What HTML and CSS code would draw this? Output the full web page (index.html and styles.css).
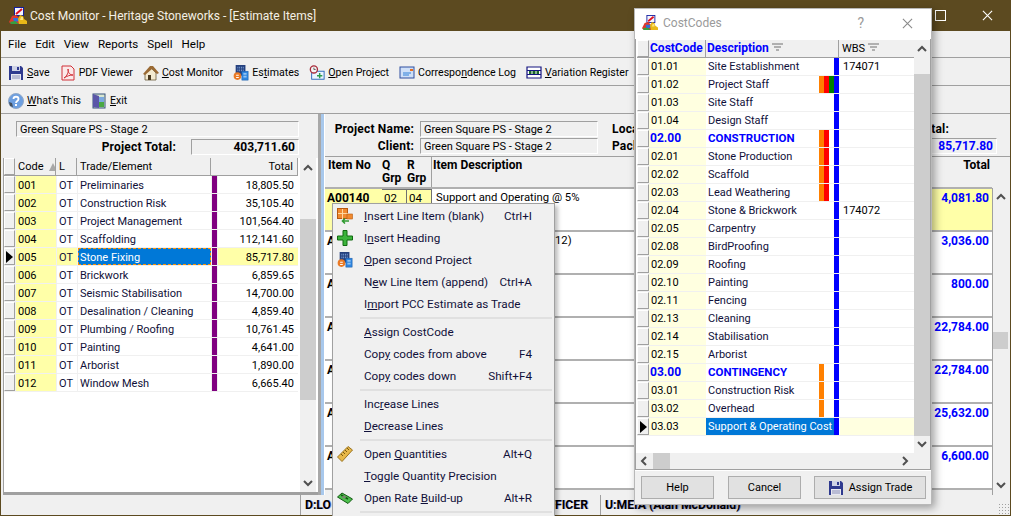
FILE: index.html
```html
<!DOCTYPE html>
<html lang="en">
<head>
    <meta charset="UTF-8">
    <title>Cost Monitor - Heritage Stoneworks - [Estimate Items]</title>
    <link rel="stylesheet" href="styles.css">
</head>
<body>
    <!-- shared icons -->
    <svg class="icon-defs" width="0" height="0">
        <symbol id="i-logo" viewBox="0 0 18 18">
            <rect x="5.500" y="0.500" width="9" height="8" fill="#f4f4ff" stroke="#1420a0"/>
            <path d="M7 7 13 2" stroke="#e0101e" stroke-width="2"/>
            <path d="M0 15 3 9l4-1 3 3 1 6H2z" fill="#e0382a"/>
            <path d="M4 11l5 0 2 3-6 1z" fill="#2f6fd8"/>
            <path d="M1 15l5-1 4 3H2z" fill="#35a040"/>
            <path d="M9 12l2-4 3 1 1 3 3 2v3l-8 0z" fill="#e8b818"/>
            <path d="M12 10l2 0 0 3-3 0z" fill="#fbe37a"/>
        </symbol>
        <symbol id="i-building" viewBox="0 0 18 18">
            <rect x="3" y="0" width="11" height="12" fill="#26417e"/>
            <path d="M5 2h1v2H5zM7 2h1v2H7zM9 2h1v2H9zM11 2h1v2h-1zM5 5h1v2H5zM7 5h1v2H7zM9 5h1v2H9zM11 5h1v2h-1z" fill="#7aa0d8"/>
            <rect x="10" y="7" width="7" height="10" fill="#2f86e0" stroke="#1a5aa8" stroke-width="0.600"/>
            <path d="M12 9h1v2h-1zM14 9h1v2h-1zM12 12h1v2h-1zM14 12h1v2h-1z" fill="#e4f2ff"/>
            <circle cx="5" cy="12.500" r="4.300" fill="#ea7a26"/>
            <path d="M3.500 11h3v1h-3zM3.500 13.500h3v1h-3z" fill="#fff"/>
        </symbol>
        <symbol id="i-floppy" viewBox="0 0 16 16">
            <path d="M1 1h12l2 2v12H1z" fill="#2f3a8f"/>
            <rect x="4" y="1" width="8" height="5" fill="#cfd3e6"/>
            <rect x="9" y="2" width="2" height="3" fill="#2f3a8f"/>
            <rect x="3" y="9" width="10" height="6" fill="#e8e8f0"/>
            <path d="M4 11h8M4 13h8" stroke="#8a8fb8"/>
        </symbol>
        <symbol id="i-up" viewBox="0 0 16 16">
            <path d="M4 10l4-4 4 4" fill="none" stroke="#505050" stroke-width="2"/>
        </symbol>
        <symbol id="i-down" viewBox="0 0 16 16">
            <path d="M4 6l4 4 4-4" fill="none" stroke="#505050" stroke-width="2"/>
        </symbol>
        <symbol id="i-left" viewBox="0 0 16 16">
            <path d="M10 4 6 8l4 4" fill="none" stroke="#505050" stroke-width="2"/>
        </symbol>
        <symbol id="i-right" viewBox="0 0 16 16">
            <path d="M6 4l4 4-4 4" fill="none" stroke="#505050" stroke-width="2"/>
        </symbol>
        <symbol id="i-sort" viewBox="0 0 11 9">
            <path d="M0 1h11M2 4h7M4 7h3" stroke="#707070"/>
        </symbol>
    </svg>

    <div class="app">
        <div class="titlebar">
            <svg class="app-logo"><use href="#i-logo"/></svg>
            <span class="app-title">Cost Monitor - Heritage Stoneworks - [Estimate Items]</span>
            <div class="win-controls">
                <span class="win-max"></span>
                <svg class="win-close" viewBox="0 0 12 12"><path d="M1 1l10 10M11 1 1 11" stroke="#fff" stroke-width="1.200"/></svg>
            </div>
        </div>

        <div class="menubar">
            <span>File</span><span>Edit</span><span>View</span><span>Reports</span><span>Spell</span><span>Help</span>
        </div>

        <div class="toolbar">
            <span class="tool">
                <svg class="tool-icon" viewBox="0 0 16 16"><use href="#i-floppy"/></svg>
                <span><u>S</u>ave</span>
            </span>
            <span class="tool">
                <svg class="tool-icon" viewBox="0 0 16 16">
                    <path d="M2 1h9l3 3v11H2z" fill="#fbe9e9" stroke="#d03038"/>
                    <path d="M4 13c3-2 5-6 4-9 0 4 2 6 5 6-3 0-6 1-9 3z" fill="none" stroke="#d03038"/>
                </svg>
                <span>PDF Viewer</span>
            </span>
            <span class="tool">
                <svg class="tool-icon" viewBox="0 0 16 16">
                    <path d="M2 9v6h11V8L8 3z" fill="#f4ead0" stroke="#6a5a3a" stroke-width="0.800"/>
                    <path d="M0 9 7 1h3l6 7-2 1-5-5-7 6z" fill="#9a6a34"/>
                    <rect x="5" y="10" width="3" height="5" fill="#4a3a20"/>
                </svg>
                <span><u>C</u>ost Monitor</span>
            </span>
            <span class="tool">
                <svg class="tool-icon"><use href="#i-building"/></svg>
                <span>Es<u>t</u>imates</span>
            </span>
            <span class="tool">
                <svg class="tool-icon" viewBox="0 0 18 18">
                    <rect x="3" y="7" width="14" height="9" fill="#eaf4ff" stroke="#1f5fb8"/>
                    <path d="M9 12h6M12 9v6" stroke="#2a9a4a" stroke-width="1.600"/>
                    <circle cx="5.500" cy="5" r="4" fill="#f4f4f4" stroke="#a82a3a" stroke-width="1.500"/>
                    <path d="M5.500 3v2h2" fill="none" stroke="#505050"/>
                </svg>
                <span><u>O</u>pen Project</span>
            </span>
            <span class="tool">
                <svg class="tool-icon" viewBox="0 0 16 16">
                    <rect x="1" y="2" width="14" height="11" fill="#cfe0f8" stroke="#2f4fa0"/>
                    <path d="M4 8h8M4 10h6" stroke="#2f80d8"/>
                    <path d="M11 4h3v2h-3z" fill="#e87020"/>
                </svg>
                <span>Correspo<u>n</u>dence Log</span>
            </span>
            <span class="tool">
                <svg class="tool-icon" viewBox="0 0 16 16">
                    <path d="M1 2h14v11H1zM1 5.500h14M1 9.500h14" fill="#fff" stroke="#141480" stroke-width="1.200"/>
                    <rect x="3" y="6" width="10" height="3" fill="#1c6a2a"/>
                    <path d="M6 6v3M10 6v3" stroke="#fff"/>
                </svg>
                <span><u>V</u>ariation Register</span>
            </span>
        </div>

        <div class="toolbar">
            <span class="tool tool-help">
                <svg class="tool-icon" viewBox="0 0 16 16">
                    <circle cx="8" cy="8" r="7.500" fill="#6d9fe0" stroke="#90a8c8"/>
                    <path d="M5.500 6c0-3 5-3 5 0 0 2-2.500 2-2.500 4" fill="none" stroke="#fff" stroke-width="1.800"/>
                    <rect x="7" y="11" width="2" height="2" fill="#fff"/>
                    <path d="M1 9l3 1 1 4-3-1z" fill="#44505e"/>
                </svg>
                <span><u>W</u>hat's This</span>
            </span>
            <span class="tool tool-exit">
                <svg class="tool-icon" viewBox="0 0 16 16">
                    <rect x="2" y="1" width="12" height="14" fill="#d8e6d0" stroke="#34507a"/>
                    <path d="M8 4h5v5H8z" fill="#7aa8e0"/>
                    <path d="M8 9h5v5H8z" fill="#49a843"/>
                    <path d="M2 1l6 2v12l-6-1z" fill="#5a56a8"/>
                </svg>
                <span><u>E</u>xit</span>
            </span>
        </div>

        <div class="main">
            <div class="trade-panel">
                <div class="trade-summary">
                    <div class="field-box field-wide">Green Square PS - Stage 2</div>
                    <div class="total-line">
                        <span class="label-bold">Project Total:</span>
                        <span class="field-box field-total">403,711.60</span>
                    </div>
                </div>
                <div class="trade-grid">
                    <div class="trade-table">
                        <div class="trade-row trade-head">
                            <span class="cell-btn"></span>
                            <span class="head-cell head-code">Code <span class="sort-tri"></span></span>
                            <span class="head-cell">L</span>
                            <span class="head-cell">Trade/Element</span>
                            <span class="head-cell head-total">Total</span>
                        </div>
                        <div class="trade-row"><span class="cell-btn"></span><span class="code">001</span><span class="lvl">OT</span><span class="name">Preliminaries</span><span class="stripe"></span><span class="amt">18,805.50</span></div>
                        <div class="trade-row"><span class="cell-btn"></span><span class="code">002</span><span class="lvl">OT</span><span class="name">Construction Risk</span><span class="stripe"></span><span class="amt">35,105.40</span></div>
                        <div class="trade-row"><span class="cell-btn"></span><span class="code">003</span><span class="lvl">OT</span><span class="name">Project Management</span><span class="stripe"></span><span class="amt">101,564.40</span></div>
                        <div class="trade-row"><span class="cell-btn"></span><span class="code">004</span><span class="lvl">OT</span><span class="name">Scaffolding</span><span class="stripe"></span><span class="amt">112,141.60</span></div>
                        <div class="trade-row is-current"><span class="cell-btn"><span class="row-arrow"></span></span><span class="code">005</span><span class="lvl">OT</span><span class="name">Stone Fixing</span><span class="stripe"></span><span class="amt">85,717.80</span></div>
                        <div class="trade-row"><span class="cell-btn"></span><span class="code">006</span><span class="lvl">OT</span><span class="name">Brickwork</span><span class="stripe"></span><span class="amt">6,859.65</span></div>
                        <div class="trade-row"><span class="cell-btn"></span><span class="code">007</span><span class="lvl">OT</span><span class="name">Seismic Stabilisation</span><span class="stripe"></span><span class="amt">14,700.00</span></div>
                        <div class="trade-row"><span class="cell-btn"></span><span class="code">008</span><span class="lvl">OT</span><span class="name">Desalination / Cleaning</span><span class="stripe"></span><span class="amt">4,859.40</span></div>
                        <div class="trade-row"><span class="cell-btn"></span><span class="code">009</span><span class="lvl">OT</span><span class="name">Plumbing / Roofing</span><span class="stripe"></span><span class="amt">10,761.45</span></div>
                        <div class="trade-row"><span class="cell-btn"></span><span class="code">010</span><span class="lvl">OT</span><span class="name">Painting</span><span class="stripe"></span><span class="amt">4,641.00</span></div>
                        <div class="trade-row"><span class="cell-btn"></span><span class="code">011</span><span class="lvl">OT</span><span class="name">Arborist</span><span class="stripe"></span><span class="amt">1,890.00</span></div>
                        <div class="trade-row"><span class="cell-btn"></span><span class="code">012</span><span class="lvl">OT</span><span class="name">Window Mesh</span><span class="stripe"></span><span class="amt">6,665.40</span></div>
                    </div>
                    <div class="vscroll vscroll-trade">
                        <svg class="arrow"><use href="#i-up"/></svg>
                        <div class="thumb"></div>
                        <svg class="arrow arrow-end"><use href="#i-down"/></svg>
                    </div>
                </div>
            </div>

            <div class="splitter"></div>

            <div class="item-panel">
                <div class="item-summary">
                    <div class="info-labels">
                        <span class="label-bold">Project Name:</span>
                        <span class="label-bold">Client:</span>
                    </div>
                    <div class="info-fields">
                        <div class="field-box">Green Square PS - Stage 2</div>
                        <div class="field-box">Green Square PS - Stage 2</div>
                    </div>
                    <div class="info-extra">
                        <span class="label-bold">Loca</span>
                        <span class="label-bold">Pack</span>
                    </div>
                    <div class="info-total">
                        <span class="label-bold">tal:</span>
                        <span class="field-box field-blue">85,717.80</span>
                    </div>
                </div>
                <div class="item-grid">
                    <div class="item-table">
                        <div class="item-row item-head">
                            <span>Item No</span>
                            <span>Q<br>Grp</span>
                            <span>R<br>Grp</span>
                            <span>Item Description</span>
                            <span class="item-amt">Total</span>
                        </div>
                        <div class="item-row is-current">
                            <span class="item-no">A00140</span><span class="grp">02</span><span class="grp">04</span>
                            <span class="item-desc">Support and Operating @ 5%</span><span class="item-amt">4,081.80</span>
                        </div>
                        <div class="item-row">
                            <span class="item-no">A</span><span></span><span></span>
                            <span class="item-desc"><span class="desc-tail">12)</span></span><span class="item-amt">3,036.00</span>
                        </div>
                        <div class="item-row"><span class="item-no">A</span><span></span><span></span><span></span><span class="item-amt">800.00</span></div>
                        <div class="item-row"><span class="item-no">A</span><span></span><span></span><span></span><span class="item-amt">22,784.00</span></div>
                        <div class="item-row"><span class="item-no">A</span><span></span><span></span><span></span><span class="item-amt">22,784.00</span></div>
                        <div class="item-row"><span class="item-no">A</span><span></span><span></span><span></span><span class="item-amt">25,632.00</span></div>
                        <div class="item-row"><span class="item-no">A</span><span></span><span></span><span></span><span class="item-amt">6,600.00</span></div>
                    </div>
                    <div class="vscroll vscroll-item">
                        <svg class="arrow"><use href="#i-up"/></svg>
                        <div class="thumb"></div>
                        <svg class="arrow arrow-end"><use href="#i-down"/></svg>
                    </div>
                </div>
            </div>
        </div>

        <div class="statusbar">
            <span class="status-cell status-first"></span>
            <span class="status-cell status-dept"><span>D:LO</span><span>FFICER</span></span>
            <span class="status-cell status-user">U:MEIA (Alan McDonald)</span>
            <span class="grip"></span>
        </div>
    </div>

    <!-- right click menu -->
    <div class="popup">
        <div class="popup-item">
            <svg class="popup-icon" viewBox="0 0 16 16">
                <rect x="0.500" y="0.500" width="10" height="10" fill="#f08a30" stroke="#b85a10"/>
                <path d="M5.500 1v10M1 5.500h10" stroke="#ffd8a0"/>
                <rect x="10" y="6" width="5.500" height="5" fill="#f08a30" stroke="#b85a10" stroke-width="0.600"/>
                <path d="M12 13H6m2-2.500L5.500 13 8 15.500" fill="none" stroke="#2f9a30" stroke-width="1.600"/>
            </svg>
            <span class="popup-text"><u>I</u>nsert Line Item (blank)</span><span class="popup-key">Ctrl+I</span>
        </div>
        <div class="popup-item">
            <svg class="popup-icon" viewBox="0 0 16 16"><path d="M6 0.500h4v5.500h5.500v4H10v5.500H6V10H0.500V6H6z" fill="#3cb43c" stroke="#116a11"/></svg>
            <span class="popup-text">I<u>n</u>sert Heading</span>
        </div>
        <div class="popup-item">
            <svg class="popup-icon"><use href="#i-building"/></svg>
            <span class="popup-text"><u>O</u>pen second Project</span>
        </div>
        <div class="popup-item"><span class="popup-text">N<u>e</u>w Line Item (append)</span><span class="popup-key">Ctrl+A</span></div>
        <div class="popup-item"><span class="popup-text">I<u>m</u>port PCC Estimate as Trade</span></div>
        <div class="popup-sep"></div>
        <div class="popup-item"><span class="popup-text"><u>A</u>ssign CostCode</span></div>
        <div class="popup-item"><span class="popup-text">Cop<u>y</u> codes from above</span><span class="popup-key">F4</span></div>
        <div class="popup-item"><span class="popup-text">Cop<u>y</u> codes down</span><span class="popup-key">Shift+F4</span></div>
        <div class="popup-sep"></div>
        <div class="popup-item"><span class="popup-text">Inc<u>r</u>ease Lines</span></div>
        <div class="popup-item"><span class="popup-text"><u>D</u>ecrease Lines</span></div>
        <div class="popup-sep"></div>
        <div class="popup-item">
            <svg class="popup-icon" viewBox="0 0 16 16">
                <path d="M0.500 11 11 0.500l4.500 3.500L5 15.500z" fill="#e8b84a" stroke="#9a7420"/>
                <path d="M4 8l2 2M6 6l2 2M8 4l2 2M10 2l2 2" stroke="#7a5a10"/>
            </svg>
            <span class="popup-text">Open <u>Q</u>uantities</span><span class="popup-key">Alt+Q</span>
        </div>
        <div class="popup-item"><span class="popup-text"><u>T</u>oggle Quantity Precision</span></div>
        <div class="popup-item">
            <svg class="popup-icon" viewBox="0 0 16 16">
                <path d="M0.500 7 5 3l10.500 6L11 13.500z" fill="#4cc04c" stroke="#155a15"/>
                <path d="M4 5l7 4" stroke="#0f5a0f" stroke-width="1.500"/>
                <ellipse cx="7" cy="7" rx="2" ry="1.500" fill="#7a8a70"/>
            </svg>
            <span class="popup-text">Open Rate <u>B</u>uild-up</span><span class="popup-key">Alt+R</span>
        </div>
        <div class="popup-sep"></div>
    </div>

    <!-- cost code dialog -->
    <div class="dialog">
        <div class="dialog-title">
            <svg class="dialog-logo"><use href="#i-logo"/></svg>
            <span class="dialog-name">CostCodes</span>
            <span class="dialog-help">?</span>
            <svg class="dialog-close" viewBox="0 0 12 12"><path d="M1 1l10 10M11 1 1 11" stroke="#8a8a8a" stroke-width="1.200"/></svg>
        </div>
        <div class="code-area">
            <div class="code-main">
                <div class="code-table">
                    <div class="code-row code-head">
                        <span class="cell-btn"></span>
                        <span class="chead chead-blue">CostCode</span>
                        <span class="chead chead-blue">Description <svg class="sort-icon"><use href="#i-sort"/></svg></span>
                        <span class="chead">WBS <svg class="sort-icon"><use href="#i-sort"/></svg></span>
                    </div>
                    <div class="code-row"><span class="cell-btn"></span><span class="cc">01.01</span><span class="cd">Site Establishment</span><span class="bars"><i class="b-blue"></i></span><span class="wbs">174071</span></div>
                    <div class="code-row"><span class="cell-btn"></span><span class="cc">01.02</span><span class="cd">Project Staff</span><span class="bars"><i class="b-orange"></i><i class="b-red"></i><i class="b-green"></i><i class="b-blue"></i></span><span class="wbs"></span></div>
                    <div class="code-row"><span class="cell-btn"></span><span class="cc">01.03</span><span class="cd">Site Staff</span><span class="bars"><i class="b-blue"></i></span><span class="wbs"></span></div>
                    <div class="code-row"><span class="cell-btn"></span><span class="cc">01.04</span><span class="cd">Design Staff</span><span class="bars"><i class="b-blue"></i></span><span class="wbs"></span></div>
                    <div class="code-row is-group"><span class="cell-btn"></span><span class="cc">02.00</span><span class="cd">CONSTRUCTION</span><span class="bars"><i class="b-orange"></i><i class="b-red"></i><i></i><i class="b-blue"></i></span><span class="wbs"></span></div>
                    <div class="code-row"><span class="cell-btn"></span><span class="cc">02.01</span><span class="cd">Stone Production</span><span class="bars"><i class="b-orange"></i><i class="b-red"></i><i></i><i class="b-blue"></i></span><span class="wbs"></span></div>
                    <div class="code-row"><span class="cell-btn"></span><span class="cc">02.02</span><span class="cd">Scaffold</span><span class="bars"><i class="b-orange"></i><i class="b-red"></i><i></i><i class="b-blue"></i></span><span class="wbs"></span></div>
                    <div class="code-row"><span class="cell-btn"></span><span class="cc">02.03</span><span class="cd">Lead Weathering</span><span class="bars"><i class="b-orange"></i><i class="b-red"></i><i></i><i class="b-blue"></i></span><span class="wbs"></span></div>
                    <div class="code-row"><span class="cell-btn"></span><span class="cc">02.04</span><span class="cd">Stone &amp; Brickwork</span><span class="bars"><i class="b-blue"></i></span><span class="wbs">174072</span></div>
                    <div class="code-row"><span class="cell-btn"></span><span class="cc">02.05</span><span class="cd">Carpentry</span><span class="bars"><i class="b-blue"></i></span><span class="wbs"></span></div>
                    <div class="code-row"><span class="cell-btn"></span><span class="cc">02.08</span><span class="cd">BirdProofing</span><span class="bars"><i class="b-blue"></i></span><span class="wbs"></span></div>
                    <div class="code-row"><span class="cell-btn"></span><span class="cc">02.09</span><span class="cd">Roofing</span><span class="bars"><i class="b-blue"></i></span><span class="wbs"></span></div>
                    <div class="code-row"><span class="cell-btn"></span><span class="cc">02.10</span><span class="cd">Painting</span><span class="bars"><i class="b-blue"></i></span><span class="wbs"></span></div>
                    <div class="code-row"><span class="cell-btn"></span><span class="cc">02.11</span><span class="cd">Fencing</span><span class="bars"><i class="b-blue"></i></span><span class="wbs"></span></div>
                    <div class="code-row"><span class="cell-btn"></span><span class="cc">02.13</span><span class="cd">Cleaning</span><span class="bars"><i class="b-blue"></i></span><span class="wbs"></span></div>
                    <div class="code-row"><span class="cell-btn"></span><span class="cc">02.14</span><span class="cd">Stabilisation</span><span class="bars"><i class="b-blue"></i></span><span class="wbs"></span></div>
                    <div class="code-row"><span class="cell-btn"></span><span class="cc">02.15</span><span class="cd">Arborist</span><span class="bars"><i class="b-blue"></i></span><span class="wbs"></span></div>
                    <div class="code-row is-group"><span class="cell-btn"></span><span class="cc">03.00</span><span class="cd">CONTINGENCY</span><span class="bars"><i class="b-orange"></i><i></i><i></i><i class="b-blue"></i></span><span class="wbs"></span></div>
                    <div class="code-row"><span class="cell-btn"></span><span class="cc">03.01</span><span class="cd">Construction Risk</span><span class="bars"><i class="b-orange"></i><i></i><i></i><i class="b-blue"></i></span><span class="wbs"></span></div>
                    <div class="code-row"><span class="cell-btn"></span><span class="cc">03.02</span><span class="cd">Overhead</span><span class="bars"><i class="b-orange"></i><i></i><i></i><i class="b-blue"></i></span><span class="wbs"></span></div>
                    <div class="code-row is-picked"><span class="cell-btn"><span class="row-arrow"></span></span><span class="cc">03.03</span><span class="cd">Support &amp; Operating Cost</span><span class="bars"><i class="b-blue"></i></span><span class="wbs"></span></div>
                </div>
                <div class="vscroll vscroll-code">
                    <svg class="arrow"><use href="#i-up"/></svg>
                    <div class="thumb"></div>
                    <svg class="arrow arrow-end"><use href="#i-down"/></svg>
                </div>
            </div>
            <div class="hscroll">
                <svg class="arrow"><use href="#i-left"/></svg>
                <div class="hthumb"></div>
                <svg class="arrow arrow-end-h"><use href="#i-right"/></svg>
            </div>
        </div>
        <div class="dialog-buttons">
            <button class="btn btn-help">Help</button>
            <button class="btn btn-cancel">Cancel</button>
            <button class="btn btn-assign">
                <svg class="btn-icon" viewBox="0 0 16 16"><use href="#i-floppy"/></svg>
                Assign Trade
            </button>
        </div>
    </div>
</body>
</html>
```

FILE: styles.css
```css
* {
    margin: 0;
    padding: 0;
    box-sizing: border-box;
}

html, body {
    width: 1011px;
    height: 516px;
    overflow: hidden;
}

body {
    font-family: Roboto, 'Noto Sans', sans-serif;
    font-size: 12px;
    color: #000;
    background: #f0f0f0;
    position: relative;
}

.icon-defs {
    position: absolute;
}

.app {
    width: 1011px;
    height: 516px;
    display: flex;
    flex-direction: column;
    border-left: 1px solid #5c4a20;
    border-right: 1px solid #5c4a20;
    border-bottom: 1px solid #5c4a20;
}

/* title bar */
.titlebar {
    height: 31px;
    flex: none;
    background: #5c4a20;
    display: flex;
    align-items: center;
    padding-left: 8px;
    color: #f4f0e6;
}

.app-logo {
    width: 18px;
    height: 18px;
}

.app-title {
    margin-left: 3px;
    font-size: 12px;
}

.win-controls {
    margin-left: auto;
    display: flex;
    align-items: center;
    gap: 36px;
    padding-right: 17px;
}

.win-max {
    width: 11px;
    height: 11px;
    border: 1px solid #fff;
}

.win-close {
    width: 11px;
    height: 11px;
}

/* menu + toolbars */
.menubar {
    height: 27px;
    flex: none;
    display: flex;
    align-items: center;
    gap: 9px;
    padding-left: 7px;
    font-size: 11.6px;
    border-bottom: 1px solid #a0a0a0;
}

.toolbar {
    height: 28px;
    flex: none;
    display: flex;
    align-items: center;
    gap: 10px;
    padding: 2px 0 0 7px;
    font-size: 10.6px;
    border-bottom: 1px solid #a0a0a0;
}

.tool {
    display: flex;
    align-items: center;
    gap: 3px;
}

.tool-icon {
    width: 16px;
    height: 16px;
}

.main {
    flex: 1;
    min-height: 0;
    display: flex;
}

.trade-panel {
    width: 317px;
    flex: none;
    display: flex;
    flex-direction: column;
}

.trade-summary {
    height: 44px;
    padding: 7px 0 0 15px;
}

.field-box {
    display: block;
    height: 16px;
    line-height: 15px;
    padding-left: 3px;
    font-size: 11px;
    border: 1px solid;
    border-color: #a0a0a0 #fff #fff #a0a0a0;
    white-space: nowrap;
    overflow: hidden;
}

.field-wide {
    width: 283px;
}

.total-line {
    display: flex;
    justify-content: flex-end;
    align-items: center;
    margin-top: 1px;
    width: 283px;
    gap: 15px;
}

.label-bold {
    font-weight: 700;
    white-space: nowrap;
    letter-spacing: 0.2px;
}

.total-line .label-bold {
    line-height: 17px;
    padding-top: 1px;
}

.field-total {
    width: 108px;
    text-align: right;
    padding-right: 3px;
    font-size: 12px;
    font-weight: 700;
}

/* left grid */
.trade-grid {
    flex: 1;
    min-height: 0;
    display: flex;
    margin-left: 2px;
    background: #fff;
    border-left: 1px solid #a0a0a0;
    border-bottom: 3px solid #a0a0a0;
}

.trade-table {
    width: 294px;
    flex: none;
    font-size: 11px;
}

.trade-row {
    height: 18px;
    display: grid;
    grid-template-columns: 11px 40px 20px 133px 5px 1fr;
    column-gap: 1px;
    line-height: 19px;
    border-bottom: 1px solid #f0f0f0;
    background: #f0f0f0;
}

.trade-row > span {
    white-space: nowrap;
    overflow: hidden;
}

.trade-head {
    grid-template-columns: 11px 40px 20px 133px 1fr;
    line-height: 18px;
    border-bottom: 1px solid #a0a0a0;
}

.head-cell {
    padding-left: 2px;
    border-right: 1px solid #a0a0a0;
}

.head-total {
    text-align: right;
    padding-right: 4px;
}

.sort-tri {
    display: inline-block;
    margin-left: 3px;
    width: 0;
    height: 0;
    border-left: 4px solid transparent;
    border-right: 4px solid transparent;
    border-bottom: 8px solid #a8a8a8;
    vertical-align: -1px;
}

.cell-btn {
    display: flex;
    align-items: center;
    justify-content: center;
    background: #f0f0f0;
    border-right: 1px solid #a0a0a0;
    border-bottom: 1px solid #a0a0a0;
    border-top: 1px solid #fff;
    border-left: 1px solid #fff;
}

.row-arrow {
    width: 0;
    height: 0;
    border-top: 6px solid transparent;
    border-bottom: 6px solid transparent;
    border-left: 7px solid #000;
}

.code {
    background: #ffffa8;
    padding-left: 2px;
}

.lvl,
.name {
    background: #fff;
    padding-left: 2px;
    color: #101038;
}

.stripe {
    background: #800080;
}

.amt {
    background: #fff;
    text-align: right;
    padding-right: 4px;
}

.trade-row.is-current .lvl,
.trade-row.is-current .amt {
    background: #ffffa8;
}

.trade-row.is-current .name {
    background: #0078d7;
    color: #fff;
    outline: 1px dashed #ff9000;
    outline-offset: -1px;
}

/* scrollbars */
.vscroll {
    width: 16px;
    flex: none;
    display: flex;
    flex-direction: column;
    background: #f0f0f0;
}

.arrow {
    width: 16px;
    height: 16px;
    flex: none;
}

.arrow-end {
    margin-top: auto;
}

.thumb {
    background: #cdcdcd;
}

.vscroll-trade {
    margin-left: 2px;
    padding: 2px 0 1px;
}

.vscroll-trade .thumb {
    margin-top: 43px;
    height: 181px;
}

.splitter {
    width: 7px;
    flex: none;
    border-left: 3px solid #a8a8a8;
    border-right: 1px solid #fff;
    background: #a8c8ec;
}

/* right side */
.item-panel {
    flex: 1;
    min-width: 0;
    display: flex;
    flex-direction: column;
}

.item-summary {
    height: 42px;
    flex: none;
    display: flex;
    padding-top: 7px;
}

.info-labels,
.info-extra {
    display: flex;
    flex-direction: column;
    gap: 1px;
    line-height: 16px;
}

.info-labels {
    width: 89px;
    text-align: right;
}

.info-fields {
    width: 178px;
    margin-left: 6px;
    display: flex;
    flex-direction: column;
    gap: 1px;
}

.info-extra {
    margin-left: 14px;
    width: 200px;
}

.info-total {
    margin-left: auto;
    width: 80px;
    margin-right: 13px;
    display: flex;
    flex-direction: column;
    align-items: flex-end;
    gap: 1px;
    line-height: 16px;
}

.info-total .label-bold {
    margin-right: 48px;
}

.field-blue {
    color: #0000ff;
    font-size: 12px;
    font-weight: 700;
    width: 68px;
    text-align: right;
    padding-right: 3px;
}

.item-grid {
    flex: 1;
    min-height: 0;
    display: flex;
    border-top: 1px solid #a0a0a0;
}

.item-table {
    width: 667px;
    flex: none;
    overflow: hidden;
}

.item-row {
    height: 43px;
    display: grid;
    grid-template-columns: 57px 25px 25px 1fr 60px;
    background: #fff;
    border-bottom: 2px solid #b0b0b0;
    line-height: 16px;
}

.item-head {
    height: 32px;
    background: #f0f0f0;
    font-weight: 700;
    line-height: 13px;
}

.item-head > span {
    padding: 2px 0 0 1px;
    border-right: 1px solid #a0a0a0;
}

.item-head > span:first-child {
    padding-left: 3px;
    border-right: none;
}

.item-head > span:nth-child(2) {
    padding-left: 0;
    border-right: none;
}

.item-head > span:nth-child(3) {
    padding-left: 0;
    border-right: 1px solid #a0a0a0;
}

.item-head .item-amt {
    color: #000;
    border-right: none;
    padding-right: 2px;
}

.item-no {
    font-weight: 700;
    padding: 1px 0 0 2px;
}

.grp {
    background: #ffffa8;
    border: 1px solid #707070;
    border-bottom: none;
    border-left: none;
    padding: 0 0 0 2px;
    font-size: 11.5px;
}

.item-desc {
    padding: 1px 0 0 4px;
    font-size: 11.3px;
}

.desc-tail {
    padding-left: 119px;
}

.item-amt {
    font-weight: 700;
    color: #0000ff;
    text-align: right;
    padding: 1px 3px 0 0;
}

.item-row.is-current .item-no,
.item-row.is-current .item-amt {
    background: #ffffa8;
}

.vscroll-item {
    padding-top: 1px;
    padding-bottom: 2px;
    border-left: 1px solid #a0a0a0;
    margin-top: 31px;
}

.vscroll-item .thumb {
    margin-top: 127px;
    height: 17px;
}

/* status bar */
.statusbar {
    height: 20px;
    flex: none;
    display: flex;
    font-size: 12.2px;
    font-weight: 700;
    line-height: 20px;
}

.status-cell {
    padding-left: 4px;
    border-left: 1px solid #a0a0a0;
    white-space: nowrap;
    text-shadow: 1px 0 0 rgba(40, 40, 220, 0.35);
}

.status-first {
    width: 299px;
    border-left: none;
}

.status-dept {
    width: 300px;
    display: flex;
    justify-content: space-between;
    padding-right: 12px;
}

.status-user {
    flex: 1;
}

.grip {
    width: 12px;
    margin-top: 8px;
    background-image: radial-gradient(#a0a0a0 1px, transparent 1px);
    background-size: 3px 3px;
}

/* popup menu */
.popup {
    position: absolute;
    left: 332px;
    top: 203px;
    width: 223px;
    height: 320px;
    padding: 1px 2px;
    font-size: 11.7px;
    background: #f0f0f0;
    border: 1px solid #a0a0a0;
    box-shadow: 3px 3px 4px rgba(0, 0, 0, 0.25);
    color: #10103a;
}

.popup-item {
    height: 22px;
    display: flex;
    align-items: center;
    position: relative;
    padding-left: 29px;
    padding-right: 20px;
    white-space: nowrap;
}

.popup-icon {
    position: absolute;
    left: 2px;
    top: 3px;
    width: 16px;
    height: 16px;
}

.popup-key {
    margin-left: auto;
}

.popup-sep {
    height: 6px;
    margin: 0 0 0 25px;
    border-top: 2px solid #e0e0e0;
    transform: translateY(2px);
}

/* dialog */
.dialog {
    position: absolute;
    left: 634px;
    top: 8px;
    width: 298px;
    height: 497px;
    background: #f0f0f0;
    border: 1px solid #b8b8b8;
    box-shadow: 3px 3px 8px rgba(0, 0, 0, 0.35);
    display: flex;
    flex-direction: column;
}

.dialog-title {
    height: 30px;
    flex: none;
    background: #fff;
    display: flex;
    align-items: center;
    padding: 0 0 2px 7px;
}

.dialog-logo {
    width: 16px;
    height: 16px;
}

.dialog-name {
    margin-left: 5px;
    color: #9a9a9a;
}

.dialog-help {
    margin-left: auto;
    color: #9a9a9a;
    font-size: 14px;
}

.dialog-close {
    width: 11px;
    height: 11px;
    margin: 0 18px 0 38px;
}

.code-area {
    height: 431px;
    flex: none;
    border: 1px solid #a0a0a0;
    border-top: none;
    background: #fff;
    display: flex;
    flex-direction: column;
}

.code-main {
    flex: 1;
    min-height: 0;
    display: flex;
}

.code-table {
    width: 278px;
    flex: none;
    padding: 1px 0 0 1px;
    font-size: 11px;
}

.code-row {
    height: 18px;
    display: grid;
    grid-template-columns: 12px 57px 113px 21px 74px;
    line-height: 17px;
    border-bottom: 1px solid #f0f0f0;
    white-space: nowrap;
}

.code-head {
    grid-template-columns: 12px 57px 133px 1fr;
    background: #f0f0f0;
    border-bottom: 1px solid #a0a0a0;
}

.chead {
    padding-left: 1px;
    border-right: 1px solid #a0a0a0;
}

.chead:last-child {
    margin-left: 1px;
    padding-left: 2px;
    border-right: none;
}

.chead-blue {
    color: #0000ff;
    font-size: 12px;
    font-weight: 700;
}

.sort-icon {
    width: 11px;
    height: 9px;
}

.cc {
    background: #ffffe0;
    padding-left: 2px;
}

.cd {
    padding-left: 2px;
    min-width: 0;
    overflow: hidden;
    color: #10103a;
}

.bars {
    display: flex;
    justify-content: flex-end;
    padding-right: 1px;
}

.bars i {
    width: 5px;
    display: block;
}

.b-orange { background: #ff8000; }
.b-red { background: #ff0000; }
.b-green { background: #008000; }
.b-blue { background: #0000ff; }

.wbs {
    padding-left: 3px;
}

.is-group .cc,
.is-group .cd {
    color: #0000ff;
    font-size: 11.5px;
    font-weight: 700;
}

.is-group .cc {
    font-size: 12px;
    padding-left: 1px;
}

.code-row.is-picked {
    grid-template-columns: 12px 57px 128px 6px 74px;
}

.is-picked .cd {
    background: #0078d7;
    color: #fff;
}

.is-picked .wbs {
    background: #ffffe0;
}

.vscroll-code {
    margin-top: 1px;
    padding: 1px 0;
    background: #f0f0f0;
}

.vscroll-code .thumb {
    margin-top: 17px;
    height: 362px;
}

.hscroll {
    height: 16px;
    flex: none;
    display: flex;
    align-items: center;
    background: #f0f0f0;
}

.hthumb {
    width: 17px;
    height: 16px;
    margin-left: 1px;
    background: #cdcdcd;
}

.arrow-end-h {
    margin-left: auto;
    margin-right: 17px;
}

.dialog-buttons {
    flex: 1;
    display: flex;
    align-items: center;
    padding-left: 6px;
    font-size: 11px;
    border-top: 1px solid #fff;
}

.btn {
    height: 23px;
    font: inherit;
    color: #000;
    background: #e1e1e1;
    border: 1px solid #adadad;
    display: flex;
    align-items: center;
    justify-content: center;
}

.btn-help,
.btn-cancel {
    width: 73px;
}

.btn-cancel {
    margin-left: 14px;
}

.btn-assign {
    width: 112px;
    margin-left: 13px;
    gap: 5px;
}

.btn-icon {
    width: 16px;
    height: 16px;
}
```
